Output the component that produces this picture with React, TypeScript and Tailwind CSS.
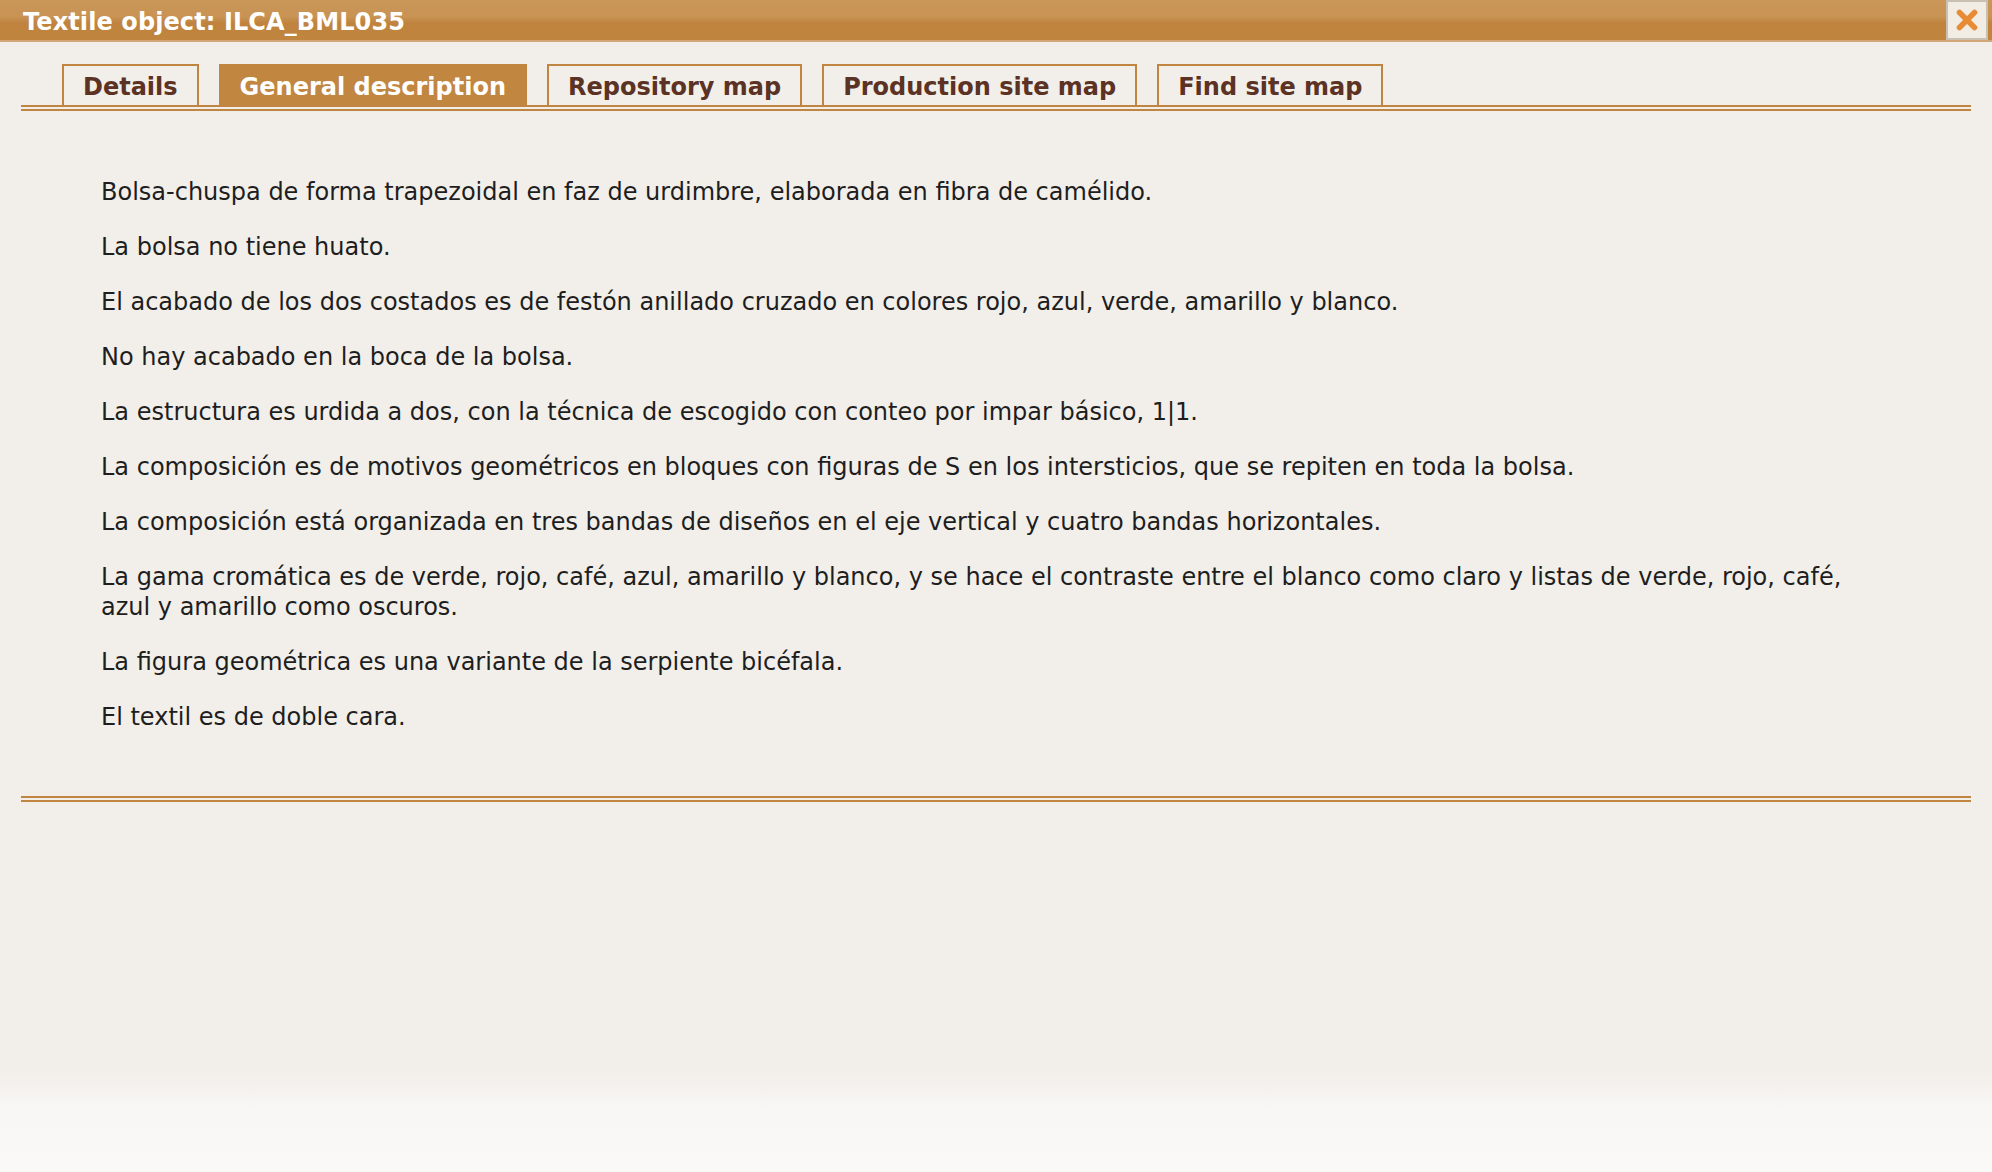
import React from "react";

const paragraphs = [
  "Bolsa-chuspa de forma trapezoidal en faz de urdimbre, elaborada en fibra de camélido.",
  "La bolsa no tiene huato.",
  "El acabado de los dos costados es de festón anillado cruzado en colores rojo, azul, verde, amarillo y blanco.",
  "No hay acabado en la boca de la bolsa.",
  "La estructura es urdida a dos, con la técnica de escogido con conteo por impar básico, 1|1.",
  "La composición es de motivos geométricos en bloques con figuras de S en los intersticios, que se repiten en toda la bolsa.",
  "La composición está organizada en tres bandas de diseños en el eje vertical y cuatro bandas horizontales.",
  "La gama cromática es de verde, rojo, café, azul, amarillo y blanco, y se hace el contraste entre el blanco como claro y listas de verde, rojo, café, azul y amarillo como oscuros.",
  "La figura geométrica es una variante de la serpiente bicéfala.",
  "El textil es de doble cara.",
];

const tabs = ["Details", "General description", "Repository map", "Production site map", "Find site map"];

export default function App() {
  return (
    <div className="h-[1172px] w-full flex flex-col bg-[#f2efea] font-['DejaVu_Sans',Verdana,sans-serif] overflow-hidden">
      {/* Title bar */}
      <div className="h-[42px] flex items-start justify-between border-b-2 border-[#d3a677] bg-[linear-gradient(to_bottom,#ca9759_0%,#c89353_42%,#bf833e_58%,#c0853f_100%)]">
        <div className="pl-[23px] pt-[2px] text-[24px] leading-[40px] font-bold text-white tracking-[0.1px]">
          Textile object: ILCA_BML035
        </div>
        <div className="mr-[4px] w-[42px] h-[40px] border-2 border-[#c9bfb2] bg-[#f1ece4] flex items-center justify-center">
          <svg width="24" height="24" viewBox="0 0 24 24">
            <g stroke="#e8862c" strokeWidth="5.5" strokeLinecap="round" opacity="0.95">
              <line x1="4.5" y1="4.5" x2="19.5" y2="19.5" />
              <line x1="19.5" y1="4.5" x2="4.5" y2="19.5" />
            </g>
          </svg>
        </div>
      </div>

      {/* Tabs */}
      <div className="px-[21px] pt-[22px]">
        <div className="ml-[41px] flex gap-[20px]">
          {tabs.map((t) => {
            const active = t === "General description";
            return (
              <div
                key={t}
                className={
                  active
                    ? "h-[41px] px-[21px] pt-[4px] flex items-center bg-[#c1863f] text-white text-[24px] font-bold leading-none"
                    : "h-[41px] px-[19px] pt-[2px] flex items-center border-2 border-b-0 border-[#c08540] text-[#5b3223] text-[24px] font-bold leading-none"
                }
              >
                {t}
              </div>
            );
          })}
        </div>
        <div className="h-[6px] border-y-2 border-[#c08540]" />
      </div>

      {/* Content */}
      <div className="px-[21px]">
        <div className="px-[80px] pt-[66px] pb-[64px] flex flex-col gap-[25px] text-[24px] leading-[30px] text-[#1e1e1e]">
          {paragraphs.map((p, i) => (
            <p key={i}>{p}</p>
          ))}
        </div>
        <div className="h-[6px] border-y-2 border-[#c08540]" />
      </div>

      <div className="flex-1" />
      <div className="h-[107px] bg-[linear-gradient(to_bottom,#f2efea_0%,#f4f1ee_20%,#f8f7f5_40%,#faf9f7_100%)]" />
    </div>
  );
}
